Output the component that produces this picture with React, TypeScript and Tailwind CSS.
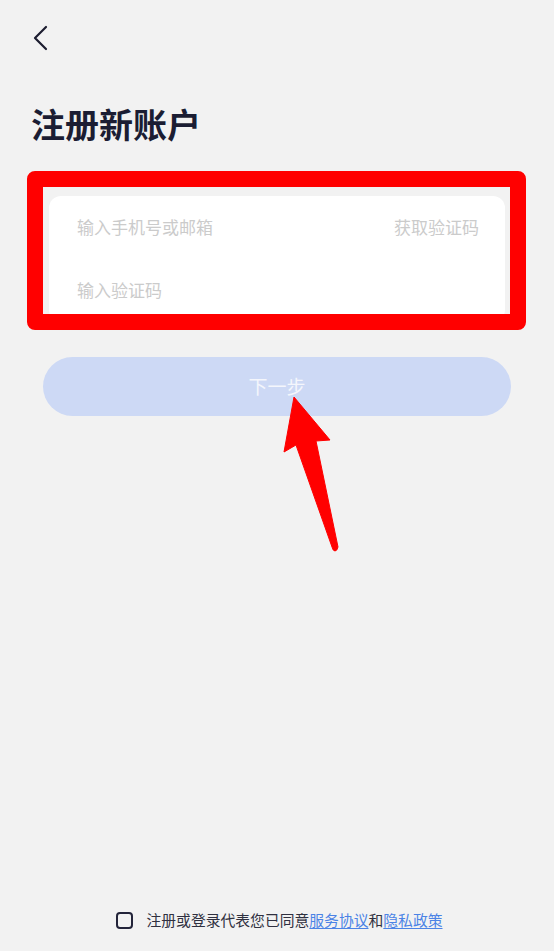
import React from "react";

export default function App() {
  return (
    <div
      className="relative flex h-[951px] w-full flex-col overflow-hidden bg-[#f2f2f2]"
      style={{ fontFamily: '"Noto Sans CJK SC", "Noto Sans", sans-serif' }}
    >
      {/* back */}
      <div className="pl-[31px] pt-[24px]">
        <svg width="20" height="28" viewBox="0 0 20 28" fill="none">
          <path d="M15 3 L4 14 L15 25" stroke="#1c1d30" strokeWidth="2.2" strokeLinecap="round" strokeLinejoin="round" />
        </svg>
      </div>

      {/* title */}
      <h1 className="mt-[52px] pl-[31px] text-[34px] font-bold leading-[40px] text-[#1b1d33]">注册新账户</h1>

      {/* card */}
      <div className="mx-[49px] mt-[52px] flex flex-col rounded-[12px] bg-white pl-[28px] pr-[26px]">
        <div className="flex h-[61px] items-center justify-between text-[17px] text-[#cbcbcb]">
          <span>输入手机号或邮箱</span>
          <span>获取验证码</span>
        </div>
        <div className="flex h-[65px] items-center text-[17px] text-[#cbcbcb]">
          <span>输入验证码</span>
        </div>
      </div>

      {/* button */}
      <div className="mx-[43px] mt-[35px] flex h-[59px] items-center justify-center rounded-full bg-[#cdd9f5] text-[19px] text-[#f4f6fc]">
        下一步
      </div>

      <div className="flex-1" />

      {/* footer */}
      <div className="flex items-center justify-center gap-[14px] pb-[20px] pl-[4px]">
        <div className="h-[17px] w-[17px] rounded-[4px] border-2 border-[#23243a]" />
        <div className="text-[14.8px] leading-[22px] text-[#2f3040]">
          注册或登录代表您已同意<span className="text-[#4b83e6] underline underline-offset-2">服务协议</span>和<span className="text-[#4b83e6] underline underline-offset-2">隐私政策</span>
        </div>
      </div>

      {/* annotation overlays */}
      <div className="pointer-events-none absolute left-[27px] top-[171px] h-[159px] w-[499px] rounded-[8px] border-[16px] border-[#ff0000]" />
      <svg className="pointer-events-none absolute left-0 top-0" width="554" height="951" viewBox="0 0 554 951">
        <path
          d="M294 397 L330 440 L316 441 L338 547 Q337 551 335 551 Q333 551 332 547 L296 445 L284 452 Z"
          fill="#ff0000"
          stroke="#ff0000"
          strokeWidth="1"
          strokeLinejoin="round"
        />
      </svg>
    </div>
  );
}
